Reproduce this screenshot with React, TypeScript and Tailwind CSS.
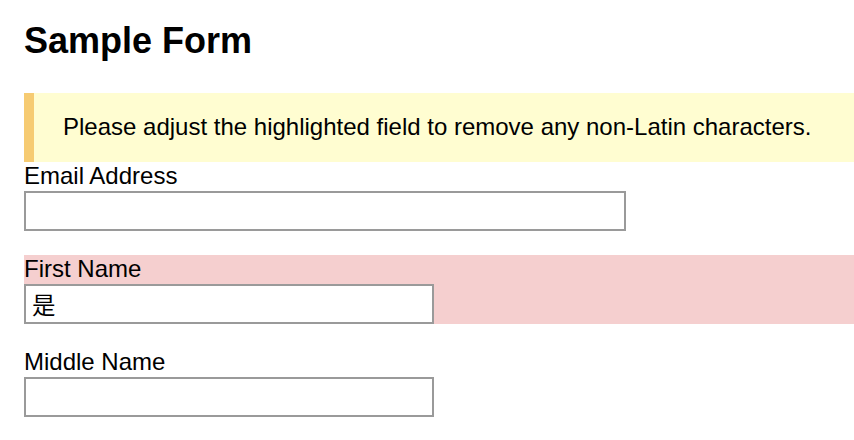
import React from "react";

export default function App() {
  return (
    <div className="min-h-[440px] bg-white pl-[24px] pt-[21px] font-['Liberation_Sans',Arial,sans-serif] text-[24px] leading-[27px] text-black">
      <h2 className="mb-[32px] text-[36px] font-bold leading-[40px]">Sample Form</h2>
      <div className="border-l-[10px] border-[#f6cb72] bg-[#fffdd1] pb-[22px] pl-[29px] pt-[20px]">
        Please adjust the highlighted field to remove any non-Latin characters.
      </div>
      <div>
        <label className="block">Email Address</label>
        <input
          type="text"
          readOnly
          className="mt-[2px] block h-[40px] w-[602px] border-2 border-[#9a9a9a] bg-white px-[6px] outline-none"
        />
      </div>
      <div className="mt-[24px] bg-[#f5cfcf]">
        <label className="block">First Name</label>
        <input
          type="text"
          readOnly
          value="是"
          className="mt-[2px] block h-[40px] w-[410px] border-2 border-[#9a9a9a] bg-white px-[6px] font-['Liberation_Sans','Noto_Sans_CJK_SC',sans-serif] text-[23.5px] text-black outline-none"
        />
      </div>
      <div className="mt-[24px]">
        <label className="block">Middle Name</label>
        <input
          type="text"
          readOnly
          className="mt-[2px] block h-[40px] w-[410px] border-2 border-[#9a9a9a] bg-white px-[6px] outline-none"
        />
      </div>
    </div>
  );
}
